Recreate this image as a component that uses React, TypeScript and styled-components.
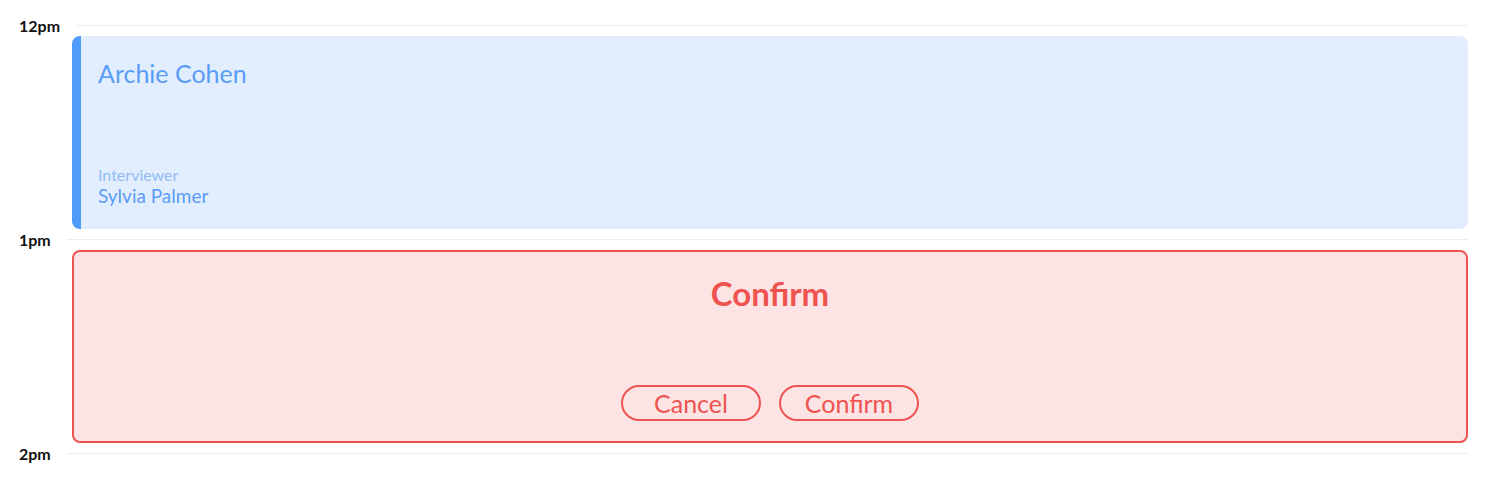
import React from 'react';
import styled, { createGlobalStyle } from 'styled-components';

const GlobalStyle = createGlobalStyle`
  html, body {
    margin: 0;
    padding: 0;
    background: #ffffff;
    font-family: Lato, 'Noto Sans', sans-serif;
  }
`;

const Timeline = styled.div`
  display: flex;
  flex-direction: column;
  padding: 15px 24px 0 19px;
`;

const HourMark = styled.div`
  display: flex;
  align-items: center;
  gap: 16px;
  height: 20px;
`;

const HourLabel = styled.span`
  font-size: 16px;
  font-weight: 700;
  color: #111111;
  white-space: nowrap;
`;

const HourLine = styled.div`
  flex: 1;
  height: 1px;
  background: #ededed;
`;

const Slot = styled.div`
  margin: 1px 0 0 53px;
  height: 193px;
  box-sizing: border-box;
  border-radius: 8px;
`;

const BookedEvent = styled(Slot)`
  display: flex;
  flex-direction: column;
  justify-content: space-between;
  background: #e2eefd;
  border-left: 9px solid #4f9bfa;
  padding: 22px 17px 22px;
  color: #5a9df6;
`;

const Candidate = styled.div`
  font-size: 25px;
`;

const Meta = styled.div`
  display: flex;
  flex-direction: column;
`;

const MetaLabel = styled.span`
  font-size: 16px;
  font-weight: 400;
  color: #8fbcf6;
`;

const MetaValue = styled.span`
  font-size: 19px;
`;

const PendingEvent = styled(Slot)`
  display: flex;
  flex-direction: column;
  align-items: center;
  justify-content: space-between;
  background: #fce4e4;
  border: 2px solid #ef5350;
  padding: 21px 0 20px;
  color: #ef5350;
`;

const PendingTitle = styled.div`
  font-size: 33px;
  font-weight: 700;
`;

const Actions = styled.div`
  display: flex;
  gap: 18px;
`;

const PillButton = styled.button`
  width: 140px;
  height: 36px;
  border: 2px solid #ef5350;
  border-radius: 18px;
  background: transparent;
  color: #ef5350;
  font-family: inherit;
  font-size: 25px;
  line-height: 1;
  padding: 0;
`;

const App = (): React.ReactElement => {
    return (
        <>
            <GlobalStyle />
            <Timeline>
                <HourMark>
                    <HourLabel>12pm</HourLabel>
                    <HourLine />
                </HourMark>
                <BookedEvent>
                    <Candidate>Archie Cohen</Candidate>
                    <Meta>
                        <MetaLabel>Interviewer</MetaLabel>
                        <MetaValue>Sylvia Palmer</MetaValue>
                    </Meta>
                </BookedEvent>
                <HourMark>
                    <HourLabel>1pm</HourLabel>
                    <HourLine />
                </HourMark>
                <PendingEvent>
                    <PendingTitle>Confirm</PendingTitle>
                    <Actions>
                        <PillButton>Cancel</PillButton>
                        <PillButton>Confirm</PillButton>
                    </Actions>
                </PendingEvent>
                <HourMark>
                    <HourLabel>2pm</HourLabel>
                    <HourLine />
                </HourMark>
            </Timeline>
        </>
    );
};

export default App;
